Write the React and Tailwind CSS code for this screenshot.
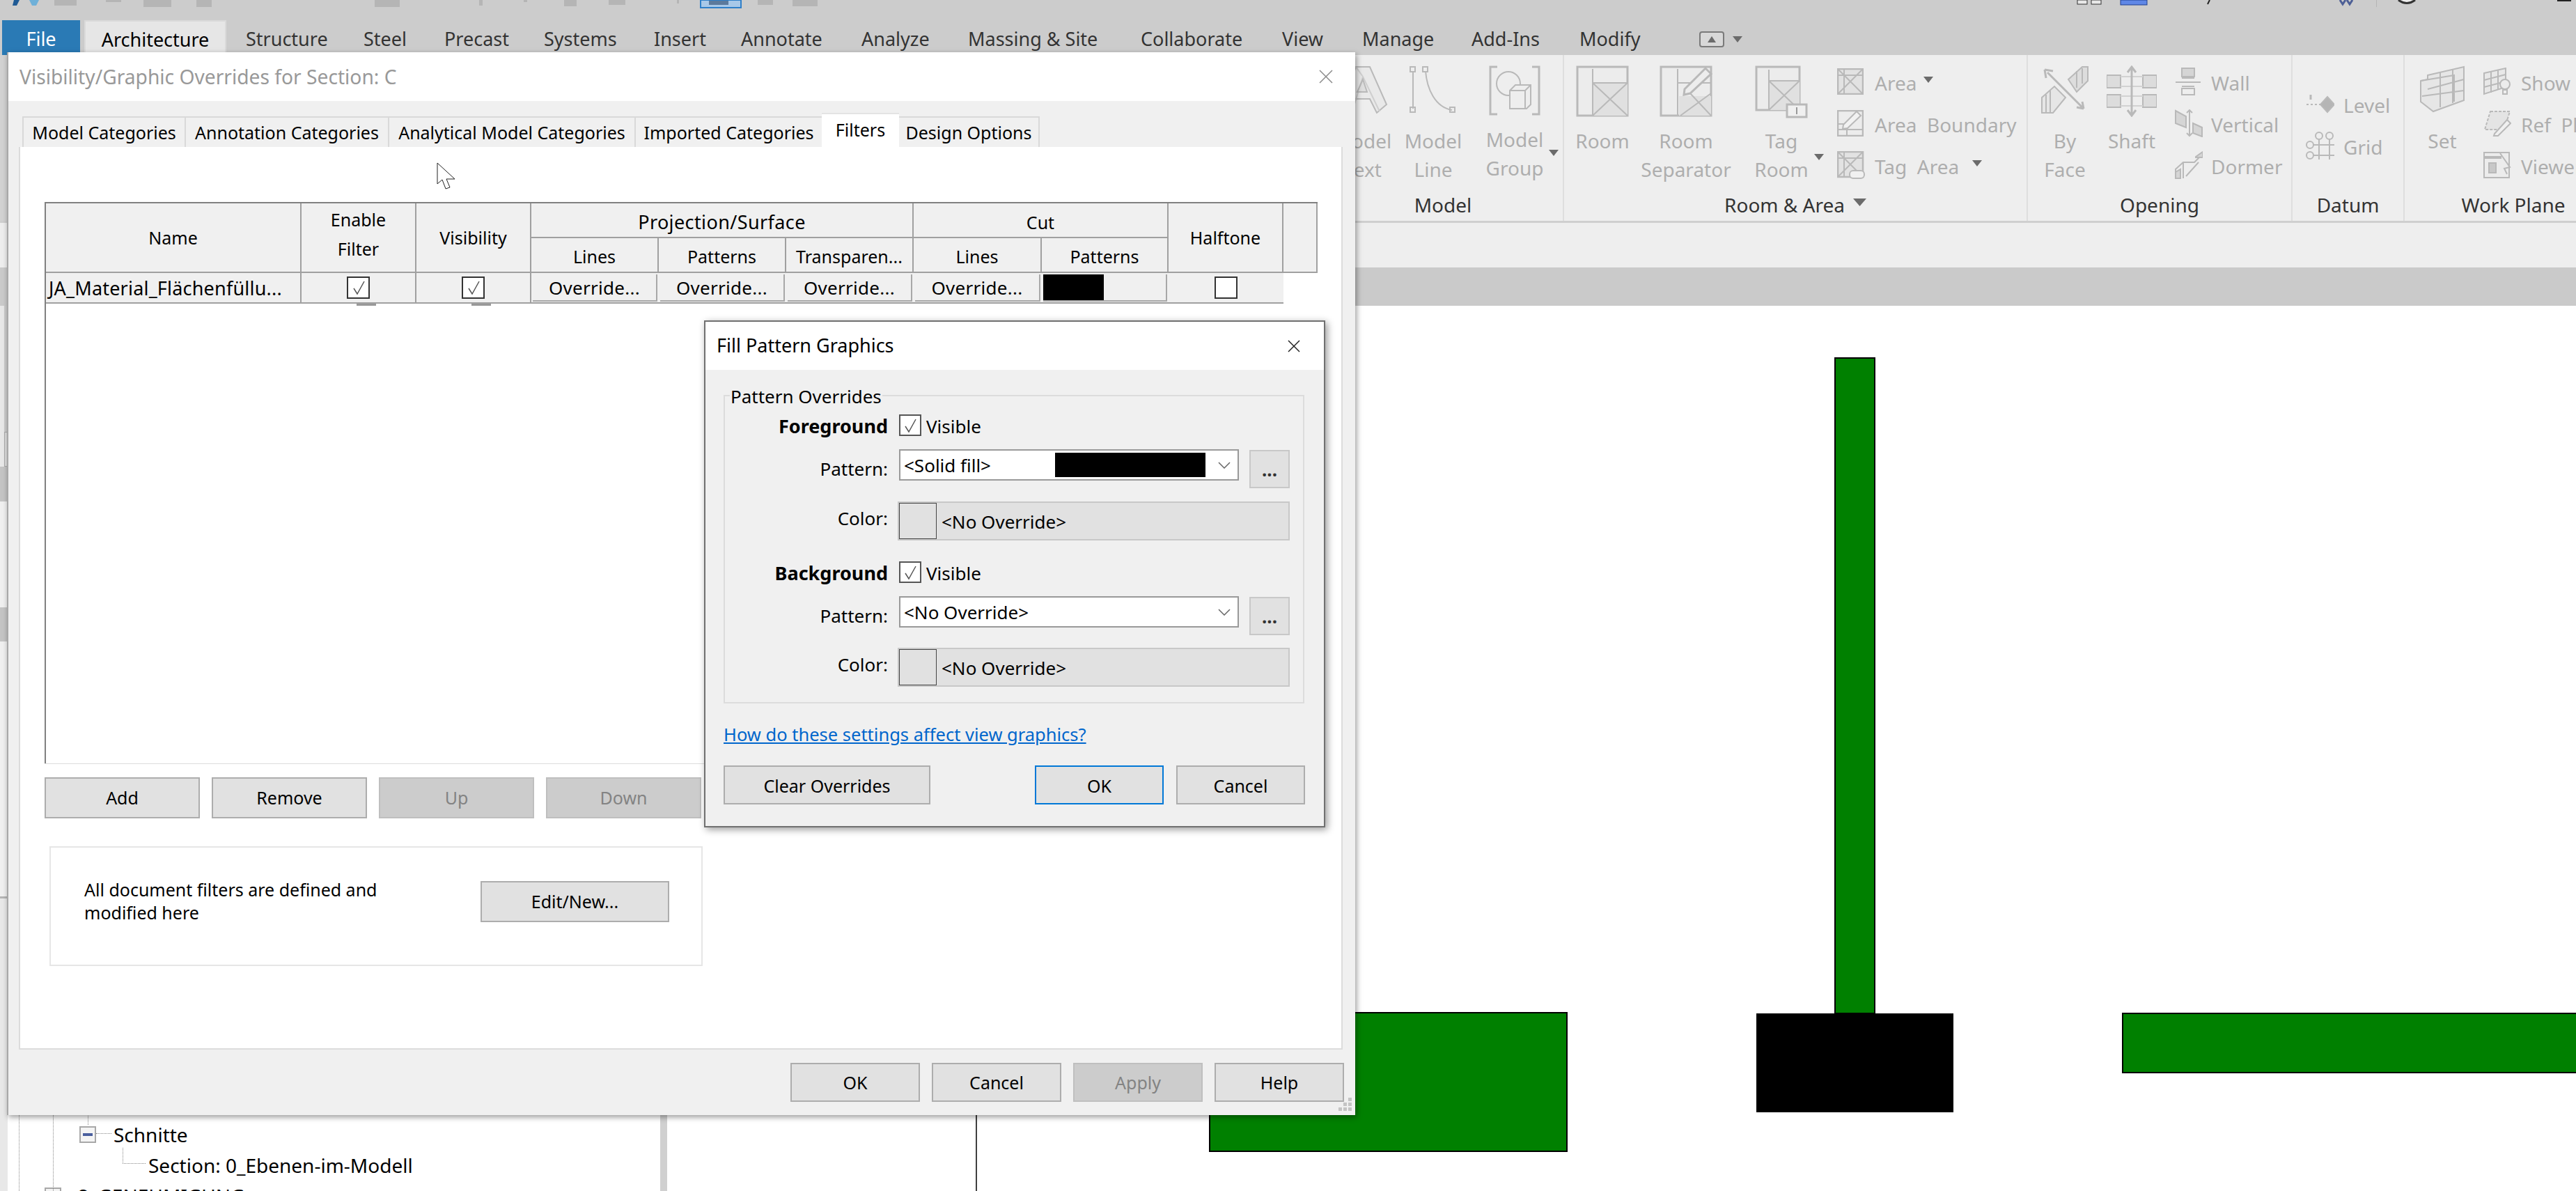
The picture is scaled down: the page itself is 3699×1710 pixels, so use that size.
import React from 'react';

const ribbonTabs = [
  ['Structure', 'w-[169px]'],
  ['Steel', 'w-[116px]'],
  ['Precast', 'w-[143px]'],
  ['Systems', 'w-[158px]'],
  ['Insert', 'w-[125px]'],
  ['Annotate', 'w-[173px]'],
  ['Analyze', 'w-[153px]'],
  ['Massing & Site', 'w-[248px]'],
  ['Collaborate', 'w-[203px]'],
  ['View', 'w-[115px]'],
  ['Manage', 'w-[157px]'],
  ['Add-Ins', 'w-[155px]'],
  ['Modify', 'w-[172px]'],
];

const dialogTabs = [
  ['Model Categories', 'w-[233px]'],
  ['Annotation Categories', 'w-[292px]'],
  ['Analytical Model Categories', 'w-[354px]'],
  ['Imported Categories', 'w-[269px]'],
];

const Caret = ({ className = '' }) => (
  <svg width="14" height="9" viewBox="0 0 14 9" preserveAspectRatio="none" className={className}>
    <polygon points="0,0 14,0 7,9" fill="#6b6b6b" />
  </svg>
);

const Ico = ({ w, h, children }) => (
  <svg width={w} height={h} viewBox={`0 0 ${w} ${h}`} fill="none" stroke="#b9b9b9" strokeWidth="2" className="shrink-0 blur-[0.4px]">
    {children}
  </svg>
);

const ModelTextIcon = () => (
  <Ico w={72} h={70}>
    <path d="M2 68 L26 2 L46 2 L70 56 L56 68 L46 48 L24 48 L18 68 Z" fill="#e9e9e9" />
    <path d="M26 2 L36 16 L60 66 M36 16 L22 62" stroke="#cfcfcf" />
    <path d="M28 38 L36 20 L42 38 Z" fill="#dedede" />
  </Ico>
);
const ModelLineIcon = () => (
  <Ico w={70} h={70}>
    <path d="M6 8 V62 M24 8 C26 34 38 60 62 64" />
    <rect x="2" y="2" width="7" height="7" />
    <rect x="2" y="60" width="7" height="7" />
    <rect x="20" y="2" width="7" height="7" />
    <rect x="59" y="60" width="7" height="7" />
  </Ico>
);
const ModelGroupIcon = () => (
  <Ico w={74} h={72}>
    <path d="M12 2 H2 V70 H12 M62 2 H72 V70 H62" strokeWidth="3" />
    <circle cx="28" cy="26" r="17" />
    <path d="M30 36 L38 28 H60 V56 L54 62 H30 Z" fill="#eeeeee" />
    <path d="M30 36 H52 V62 M52 36 L60 28" />
  </Ico>
);
const RoomIcon = () => (
  <Ico w={76} h={74}>
    <rect x="2" y="2" width="72" height="70" fill="#ececec" strokeWidth="3" />
    <rect x="24" y="25" width="50" height="47" fill="#e0e0e0" stroke="none" />
    <path d="M24 5 V72 M24 25 H74 M24 72 L74 25 M24 25 L74 72" />
  </Ico>
);
const SeparatorIcon = () => (
  <Ico w={76} h={74}>
    <rect x="2" y="2" width="72" height="70" fill="#ececec" strokeWidth="3" />
    <rect x="28" y="44" width="46" height="28" fill="#e0e0e0" stroke="none" />
    <path d="M26 5 V72 M26 25 H74 M30 72 L74 40 M44 40 L74 72" />
    <path d="M36 34 L66 4 L74 12 L44 40 L35 42 Z" fill="#ededed" strokeWidth="3" />
  </Ico>
);
const TagRoomIcon = () => (
  <Ico w={76} h={76}>
    <rect x="2" y="2" width="62" height="62" fill="#ececec" strokeWidth="3" />
    <rect x="20" y="22" width="44" height="42" fill="#e0e0e0" stroke="none" />
    <path d="M20 6 V64 M20 22 H64 M20 64 L64 22 M20 22 L64 64" />
    <rect x="46" y="56" width="28" height="18" fill="#f0f0f0" strokeWidth="3" />
    <path d="M60 60 V70" stroke="#999" />
  </Ico>
);
const AreaIcon = () => (
  <Ico w={38} h={38}>
    <rect x="1" y="1" width="36" height="36" fill="#e2e2e2" strokeWidth="2.5" />
    <path d="M2 2 L36 36 M36 2 L2 36 M10 2 V36 M2 10 H36" />
  </Ico>
);
const BoundaryIcon = () => (
  <Ico w={38} h={38}>
    <rect x="1" y="1" width="36" height="36" fill="#ececec" strokeWidth="2.5" />
    <path d="M2 28 H36 M14 28 V36 M2 20 H14" />
    <path d="M9 21 L28 2 L34 8 L15 26 L8 27 Z" fill="#f2f2f2" />
  </Ico>
);
const TagAreaIcon = () => (
  <Ico w={40} h={40}>
    <rect x="1" y="1" width="36" height="36" fill="#e2e2e2" strokeWidth="2.5" />
    <path d="M2 2 L36 36 M36 2 L2 36 M10 2 V36 M2 10 H36" />
    <rect x="18" y="28" width="21" height="11" rx="5" fill="#f0f0f0" />
  </Ico>
);
const ByFaceIcon = () => (
  <Ico w={70} h={70}>
    <path d="M40 20 L60 2 H68 V22 L52 38 Z" fill="#dddddd" />
    <path d="M52 8 V32 M60 4 V26" />
    <path d="M2 46 L20 30 L36 46 L18 68 H2 Z" fill="#e6e6e6" />
    <path d="M8 42 V68 M14 36 V68" />
    <path d="M10 10 L60 60 M6 6 L18 8 M6 6 L8 18 M62 62 L52 60 M62 62 L60 52" strokeWidth="3" />
  </Ico>
);
const ShaftIcon = () => (
  <Ico w={72} h={74}>
    <rect x="0" y="14" width="20" height="18" fill="#dcdcdc" />
    <rect x="52" y="14" width="20" height="18" fill="#dcdcdc" />
    <rect x="0" y="42" width="20" height="18" fill="#dcdcdc" />
    <rect x="52" y="42" width="20" height="18" fill="#dcdcdc" />
    <path d="M20 16 H52 M20 30 H52 M20 44 H52 M20 58 H52" stroke="#d2d2d2" />
    <path d="M36 2 V72 M30 10 L36 2 L42 10 M30 64 L36 72 L42 64" strokeWidth="3" />
  </Ico>
);
const WallIcon = () => (
  <Ico w={38} h={40}>
    <rect x="10" y="1" width="18" height="12" fill="#d5d5d5" />
    <rect x="10" y="30" width="18" height="9" />
    <path d="M1 21 H37 M10 15 H28 M10 27 H28" />
  </Ico>
);
const VerticalIcon = () => (
  <Ico w={40} h={40}>
    <path d="M1 2 L16 10 V26 L1 20 Z" fill="#d5d5d5" />
    <path d="M26 20 L39 26 V39 L26 34 Z" fill="#d5d5d5" />
    <path d="M21 1 V38 M17 5 L21 1 L25 5 M17 34 L21 38 L25 34" />
  </Ico>
);
const DormerIcon = () => (
  <Ico w={40} h={40}>
    <path d="M1 39 V26 L12 16 H28 L40 4 M12 16 V39 M16 36 L34 16" />
    <path d="M30 8 L40 1 V9 H30 Z M1 30 L8 26 V39 H1 Z" fill="#d5d5d5" />
  </Ico>
);
const LevelIcon = () => (
  <Ico w={41} h={28}>
    <path d="M1 15 H22" strokeDasharray="3 3" />
    <path d="M7 1 V8" strokeWidth="3" />
    <polygon points="31,4 41,15 31,26 21,15" fill="#b5b5b5" />
  </Ico>
);
const GridIcon = () => (
  <Ico w={41} h={40}>
    <circle cx="19" cy="6" r="5" />
    <circle cx="34" cy="6" r="5" />
    <circle cx="6" cy="19" r="5" />
    <circle cx="6" cy="34" r="5" />
    <path d="M19 11 V40 M34 11 V40 M11 19 H41 M11 34 H41" />
  </Ico>
);
const SetIcon = () => (
  <Ico w={66} h={68}>
    <path d="M12 14 L64 2 V50 L20 66 L2 52 V22 L12 20 Z" fill="#e6e6e6" />
    <path d="M12 14 V20 M30 10 V60 M48 6 V54 M2 22 L50 14 V52 M12 34 L64 20 M4 44 L64 36" />
  </Ico>
);
const ShowIcon = () => (
  <Ico w={40} h={40}>
    <path d="M1 8 L32 1 V28 L1 38 Z" fill="#e8e8e8" />
    <path d="M11 6 V36 M21 4 V32 M1 18 L32 10 M1 28 L32 20" />
    <circle cx="31" cy="24" r="7" fill="#ececec" />
    <path d="M28 32 H34 V38 H28 Z" />
  </Ico>
);
const RefIcon = () => (
  <Ico w={40} h={38}>
    <path d="M10 2 L38 2 L30 28 L2 28 Z" fill="#e4e4e4" strokeDasharray="4 2" />
    <path d="M16 34 L34 14 L39 19 L21 37 L15 37 Z" fill="#f0f0f0" />
  </Ico>
);
const ViewerIcon = () => (
  <Ico w={40} h={38}>
    <rect x="1" y="1" width="36" height="36" fill="#ececec" />
    <path d="M1 8 H26" strokeWidth="4" />
    <path d="M8 16 H18 V30 H8 Z" fill="#c8c8c8" />
    <path d="M24 2 L38 22 L30 24 L34 32" />
  </Ico>
);

const BigTool = ({ width, icon, lines, textClass = '-mt-[2px]', caret = '' }) => (
  <div className={`relative flex flex-col items-center shrink-0 ${width}`}>
    <div className="h-[105px] pt-[15px] flex justify-center">{icon}</div>
    <div className={`flex flex-col items-center text-[28px] leading-[41px] text-[#aeaeae] whitespace-nowrap ${textClass}`}>
      {lines.map((l) => (
        <span key={l}>{l}</span>
      ))}
    </div>
    {caret && <Caret className={`absolute ${caret}`} />}
  </div>
);

const SmallTool = ({ icon, label, gap = 'gap-[16px]', caret = '' }) => (
  <div className={`flex items-center h-[40px] whitespace-pre text-[28px] text-[#aeaeae] ${gap}`}>
    {icon}
    <span className="pt-[3px]">{label}</span>
    {caret && <Caret className={caret} />}
  </div>
);

const RibbonGroup = ({ width, label, children, arrow }) => (
  <div className={`flex flex-col shrink-0 h-full border-r-2 border-[#dedede] last:border-r-0 ${width}`}>
    <div className="flex h-[196px]">{children}</div>
    <div className="flex items-center justify-center gap-[12px] h-[38px] text-[28px] text-[#333333] whitespace-nowrap">
      {label}
      {arrow && <Caret className="mb-[8px] w-[19px] h-[11px]" />}
    </div>
  </div>
);

const Check = ({ checked, size = 'w-[33px] h-[32px]', dark = 'border-[#333333]' }) => (
  <span className={`relative flex items-center justify-center bg-white border-2 shrink-0 ${size} ${dark}`}>
    {checked && (
      <svg width="24" height="24" viewBox="0 0 24 24" fill="none" stroke="#555555" strokeWidth="1.5">
        <path d="M5 13 L10 21 L20 3" />
      </svg>
    )}
  </span>
);

const Chevron = () => (
  <svg width="18" height="10" viewBox="0 0 18 10" fill="none" stroke="#666666" strokeWidth="1.5" className="shrink-0">
    <path d="M1 1 L9 9 L17 1" />
  </svg>
);

const Button = ({ className = '', disabled, focused, children }) => {
  let tone = 'bg-[#e1e1e1] border-[#adadad] text-black';
  if (disabled) tone = 'bg-[#cccccc] border-[#bfbfbf] text-[#838383]';
  if (focused) tone = 'bg-[#e1e1e1] border-[#0078d7] text-black';
  return (
    <div className={`flex items-center justify-center shrink-0 border-2 pt-[1px] text-[25px] ${tone} ${className}`}>
      {children}
    </div>
  );
};

const HeaderCell = ({ className = '', children }) => (
  <div className={`flex items-center justify-center text-center bg-[#f0f0f0] border-r-2 border-b-2 border-[#a0a0a0] leading-[42px] ${className}`}>
    {children}
  </div>
);

const OverrideCell = ({ children }) => (
  <div className="flex h-[44px] bg-[#f0f0f0] border-b-2 border-[#a0a0a0] p-[2px] pb-[1px]">
    <div className="flex flex-1 items-center justify-center pt-[2px] border-b-2 border-r-2 border-[#a8a8a8] text-[26px] tracking-[0.3px]">{children}</div>
  </div>
);

const ColorRow = ({ top }) => (
  <div className={`flex ${top}`}>
    <span className="w-[235px] pr-[1px] pt-[2px] text-right text-[26px] leading-[44px]">Color:</span>
    <div className="flex items-center ml-[13px] w-[563px] h-[56px] bg-[#e1e1e1] border-2 border-[#c8c8c8]">
      <span className="w-[54px] h-[52px] bg-[#e1e1e1] border border-[#444444]" />
      <span className="ml-[7px] pt-[3px] text-[26px]">{'<No Override>'}</span>
    </div>
  </div>
);

const PatternRow = ({ top, children }) => (
  <div className={`flex h-[55px] ${top}`}>
    <span className="w-[235px] pr-[1px] pt-[6px] text-right text-[26px] leading-[44px]">Pattern:</span>
    <div className="flex items-center ml-[15px] w-[488px] h-[45px] pl-[5px] pr-[10px] bg-white border-2 border-[#999999] text-[26px]">
      {children}
    </div>
    <div className="flex justify-center ml-[15px] mt-[1px] w-[58px] h-[55px] bg-[#e1e1e1] border-2 border-[#c8c8c8] text-[26px] font-bold text-[#333333] pt-[12px] leading-[28px]">
      ...
    </div>
  </div>
);

const VisibleRow = ({ top, label }) => (
  <div className={`flex items-center h-[31px] ${top}`}>
    <span className="w-[235px] pr-[1px] pt-[3px] text-right text-[27px] font-bold whitespace-nowrap">{label}</span>
    <Check checked size="w-[32px] h-[31px] ml-[15px]" dark="border-[#555555]" />
    <span className="ml-[7px] pt-[3px] text-[26px]">Visible</span>
  </div>
);

const TopIcons = () => (
  <svg width="3699" height="13" viewBox="0 0 3699 13" className="block">
    <path d="M20 0 H28 L24 8 H18 Z" fill="#1f5a94" />
    <path d="M42 0 H56 L52 8 H46 Z" fill="#6fb0d8" />
    <g fill="#b5b5b5">
      <rect x="78" y="0" width="32" height="8" />
      <rect x="152" y="0" width="22" height="3" />
      <rect x="206" y="0" width="40" height="10" />
      <rect x="282" y="0" width="22" height="10" />
      <rect x="538" y="0" width="36" height="10" />
      <rect x="688" y="0" width="5" height="8" />
      <rect x="752" y="0" width="5" height="3" />
      <rect x="810" y="0" width="18" height="9" />
      <rect x="874" y="0" width="24" height="7" />
      <rect x="972" y="0" width="3" height="5" />
      <rect x="1088" y="0" width="22" height="7" />
      <rect x="1138" y="0" width="36" height="9" />
    </g>
    <rect x="1006" y="0" width="58" height="11" fill="#a8c8e8" stroke="#2f7fc8" strokeWidth="2" />
    <rect x="1018" y="1" width="28" height="6" fill="#5c7a9c" />
    <rect x="2983" y="0" width="14" height="6" fill="#e8e8e8" stroke="#333" />
    <rect x="3003" y="0" width="14" height="6" fill="#e8e8e8" stroke="#333" />
    <rect x="3045" y="0" width="38" height="7" fill="#5f87e6" stroke="#1f3f8f" />
    <path d="M3173 0 L3170 6" stroke="#222" strokeWidth="2" />
    <path d="M3360 0 L3364 6 L3368 0 M3370 0 L3374 6 L3378 0" stroke="#4d5f96" strokeWidth="3" fill="none" />
    <rect x="3412" y="0" width="1" height="10" fill="#b5b5b5" />
    <path d="M3444 0 Q3456 9 3468 0" stroke="#333" strokeWidth="3" fill="#eeeeee" />
    <rect x="3672" y="0" width="20" height="2" fill="#222" />
  </svg>
);

const SectionDrawing = () => (
  <svg width="2741" height="1271" viewBox="958 439 2741 1271" className="block">
    <line x1="1402" y1="1590" x2="1402" y2="1710" stroke="#000" strokeWidth="1.5" />
    <rect x="1737" y="1454" width="513" height="199" fill="#008000" stroke="#000" strokeWidth="2" />
    <rect x="2635" y="514" width="57" height="941" fill="#008000" stroke="#000" strokeWidth="2" />
    <rect x="2522" y="1455" width="283" height="142" fill="#000" />
    <rect x="3048" y="1455" width="700" height="85" fill="#008000" stroke="#000" strokeWidth="2" />
  </svg>
);

const LeftStrip = () => (
  <div className="flex flex-col shrink-0 w-[11px] h-full bg-[#e8e8e8]">
    <div className="h-[181px] ml-[6px] bg-[#cccccc]" />
    <div className="h-[50px] ml-[6px] bg-[#dddddd] border border-[#aaaaaa]" />
    <div className="h-[50px] bg-[#c4c4c4]" />
    <div className="h-[152px] bg-[#f0f0f0]" />
    <div className="h-[49px] bg-[#c4c4c4]" />
    <div className="h-[366px] bg-[#f0f0f0]" />
    <div className="h-[3px] bg-[#b5b5b5]" />
  </div>
);

export default function App() {
  return (
    <div className="relative w-[3699px] h-[1710px] overflow-hidden bg-white text-black font-['Noto_Sans',sans-serif]">
      {/* app chrome behind the dialogs */}
      <div className="h-[79px] bg-[#cccccc]">
        <div className="h-[29px]">
          <TopIcons />
        </div>
        <div className="flex h-[46px] pl-[3px] text-[27px] text-[#333333] whitespace-nowrap">
          <div className="flex items-center justify-center w-[112px] h-[50px] pt-[4px] bg-[#2a7ab5] text-white">File</div>
          <div className="flex items-center justify-center ml-[6px] w-[204px] h-[46px] pt-[8px] bg-[#e6e6e6] border-2 border-b-0 border-[#dadada] text-black">
            Architecture
          </div>
          <div className="flex items-center ml-[28px] pt-[8px]">
            {ribbonTabs.map(([label, w]) => (
              <span key={label} className={w}>{label}</span>
            ))}
            <span className="flex items-center justify-center w-[36px] h-[23px] border-2 border-[#7a7a7a] rounded-[4px] bg-[#d8d8d8]">
              <svg width="12" height="9" viewBox="0 0 12 9"><polygon points="6,0 12,9 0,9" fill="#6b6b6b" /></svg>
            </span>
            <Caret className="ml-[12px]" />
          </div>
        </div>
      </div>

      <div className="flex h-[241px] bg-[#eeeeee] border-b-[3px] border-[#cfcfcf]">
        <div className="w-[10px] shrink-0 bg-[#d2d2d2]" />
        <div className="w-[1890px] shrink-0" />
        <RibbonGroup width="w-[346px]" label="Model">
          <BigTool width="w-[114px]" icon={<ModelTextIcon />} lines={['Model', 'Text']} />
          <BigTool width="w-[88px]" icon={<ModelLineIcon />} lines={['Model', 'Line']} />
          <div className="w-[18px]" />
          <BigTool width="w-[110px]" icon={<ModelGroupIcon />} lines={['Model', 'Group']} textClass="-mt-[4px]" caret="left-[104px] top-[136px]" />
        </RibbonGroup>
        <RibbonGroup width="w-[666px]" label="Room & Area" arrow>
          <BigTool width="w-[110px]" icon={<RoomIcon />} lines={['Room']} />
          <BigTool width="w-[130px]" icon={<SeparatorIcon />} lines={['Room', 'Separator']} />
          <BigTool width="w-[144px]" icon={<TagRoomIcon />} lines={['Tag', 'Room']} caret="left-[119px] top-[142px]" />
          <div className="flex flex-col gap-[20px] ml-[8px] pt-[18px]">
            <SmallTool icon={<AreaIcon />} label="Area" caret="-ml-[6px] mb-[6px]" />
            <SmallTool icon={<BoundaryIcon />} label="Area  Boundary" />
            <SmallTool icon={<TagAreaIcon />} label="Tag  Area" gap="gap-[14px]" caret="ml-[5px] mb-[6px]" />
          </div>
        </RibbonGroup>
        <RibbonGroup width="w-[380px]" label="Opening">
          <BigTool width="w-[106px]" icon={<ByFaceIcon />} lines={['By', 'Face']} />
          <BigTool width="w-[86px]" icon={<ShaftIcon />} lines={['Shaft']} />
          <div className="flex flex-col gap-[20px] ml-[19px] pt-[18px]">
            <SmallTool icon={<WallIcon />} label="Wall" gap="gap-[14px]" />
            <SmallTool icon={<VerticalIcon />} label="Vertical" gap="gap-[12px]" />
            <SmallTool icon={<DormerIcon />} label="Dormer" gap="gap-[12px]" />
          </div>
        </RibbonGroup>
        <RibbonGroup width="w-[161px]" label="Datum">
          <div className="flex flex-col gap-[20px] ml-[19px] pt-[50px]">
            <SmallTool icon={<LevelIcon />} label="Level" gap="gap-[13px]" />
            <SmallTool icon={<GridIcon />} label="Grid" gap="gap-[13px]" />
          </div>
        </RibbonGroup>
        <RibbonGroup width="w-[312px]" label="Work Plane">
          <BigTool width="w-[108px]" icon={<SetIcon />} lines={['Set']} />
          <div className="flex flex-col gap-[20px] ml-[5px] pt-[18px]">
            <SmallTool icon={<ShowIcon />} label="Show" gap="gap-[14px]" />
            <SmallTool icon={<RefIcon />} label="Ref  Plane" gap="gap-[14px]" />
            <SmallTool icon={<ViewerIcon />} label="Viewer" gap="gap-[14px]" />
          </div>
        </RibbonGroup>
      </div>

      <div className="h-[64px] bg-[#eeeeee]" />
      <div className="h-[55px] bg-[#cacaca]" />

      <div className="flex h-[1271px]">
        <LeftStrip />
        <div className="flex flex-col w-[937px] shrink-0 pt-[1168px] text-[28px] whitespace-nowrap">
          <div className="flex items-center shrink-0 h-[44px] pl-[103px]">
            <span className="flex items-center justify-center w-[24px] h-[24px] bg-[#f4f4f4] border-2 border-[#a8a8a8]">
              <span className="w-[14px] h-[4px] bg-[#4a5f9e]" />
            </span>
            <span className="ml-[25px]">Schnitte</span>
          </div>
          <div className="flex items-center shrink-0 h-[44px] pl-[202px]">Section: 0_Ebenen-im-Modell</div>
          <div className="flex items-center shrink-0 h-[44px] pl-[53px]">
            <span className="w-[24px] h-[24px] bg-[#f4f4f4] border-2 border-[#a8a8a8]" />
            <span className="ml-[24px]">2_GENEHMIGUNG</span>
          </div>
        </div>
        <div className="w-[10px] shrink-0 bg-[#d0d0d0]" />
        <div className="flex-1">
          <SectionDrawing />
        </div>
      </div>

      {/* tree connectors */}
      <div className="absolute left-[27px] top-[1600px] h-[110px] border-l border-dotted border-[#888888]" />
      <div className="absolute left-[76px] top-[1600px] h-[110px] border-l border-dotted border-[#888888]" />
      <div className="absolute left-[126px] top-[1600px] h-[15px] border-l border-dotted border-[#888888]" />
      <div className="absolute left-[138px] top-[1627px] w-[22px] border-t border-dotted border-[#888888]" />
      <div className="absolute left-[176px] top-[1648px] w-[33px] h-[23px] border-l border-b border-dotted border-[#888888]" />

      {/* Visibility/Graphic Overrides dialog */}
      <div className="absolute left-[10px] top-[75px] flex flex-col w-[1936px] h-[1526px] bg-[#f0f0f0] border-l-2 border-[#a8a8a8] shadow-[2px_3px_8px_rgba(0,0,0,0.4)] text-[25px]">
        <div className="flex items-center justify-between shrink-0 h-[70px] pl-[16px] pr-[32px] bg-white text-[28.2px] text-[#999999]">
          <span>Visibility/Graphic Overrides for Section: C</span>
          <svg width="20" height="20" viewBox="0 0 20 20" stroke="#8a8a8a" strokeWidth="1.5">
            <path d="M1 1 L19 19 M19 1 L1 19" />
          </svg>
        </div>

        <div className="flex items-end shrink-0 h-[66px] ml-[20px]">
          {dialogTabs.map(([label, w]) => (
            <div key={label} className={`flex items-center justify-center h-[44px] pt-[2px] bg-[#f0f0f0] border-t-2 border-l-2 border-[#d9d9d9] whitespace-nowrap ${w}`}>
              {label}
            </div>
          ))}
          <div className="flex justify-center w-[111px] h-[49px] pt-[4px] bg-white border-t-2 border-[#e3e3e3]">Filters</div>
          <div className="flex items-center justify-center w-[202px] h-[44px] pt-[2px] bg-[#f0f0f0] border-t-2 border-r-2 border-[#d9d9d9] whitespace-nowrap">
            Design Options
          </div>
        </div>

        <div className="shrink-0 ml-[15px] w-[1901px] h-[1296px] pt-[79px] pl-[35px] bg-white border-2 border-[#dcdcdc] border-t-0">
          <div className="w-[1828px] h-[806px] border-l-2 border-t-2 border-[#808080] border-b-0">
            <div className="grid grid-cols-[367px_165px_165px_183px_183px_183px_184px_182px_165px_49px] grid-rows-[50px_50px_44px]">
              <HeaderCell className="row-span-2">Name</HeaderCell>
              <HeaderCell className="row-span-2 pb-[11px]">Enable<br />Filter</HeaderCell>
              <HeaderCell className="row-span-2">Visibility</HeaderCell>
              <HeaderCell className="col-span-3 pt-[6px]">
                <span className="text-[27px] tracking-[0.4px]">Projection/Surface</span>
              </HeaderCell>
              <HeaderCell className="col-span-2 pt-[6px]">Cut</HeaderCell>
              <HeaderCell className="row-span-2">Halftone</HeaderCell>
              <HeaderCell className="row-span-2 border-r-0" />
              <HeaderCell className="pt-[3px]">Lines</HeaderCell>
              <HeaderCell className="pt-[3px]">Patterns</HeaderCell>
              <HeaderCell className="pt-[3px]">Transparen...</HeaderCell>
              <HeaderCell className="pt-[3px]">Lines</HeaderCell>
              <HeaderCell className="pt-[3px]">Patterns</HeaderCell>

              <div className="flex items-center h-[44px] pl-[4px] pt-[2px] bg-[#f0f0f0] border-b-2 border-r-2 border-[#a0a0a0] whitespace-nowrap overflow-hidden text-[27px] tracking-[0.2px]">
                JA_Material_Flächenfüllu...
              </div>
              <div className="relative flex items-center justify-center h-[44px] bg-[#f0f0f0] border-b-2 border-r-2 border-[#a0a0a0]">
                <Check checked />
                <span className="absolute left-[79px] top-[44px] w-[28px] h-[3px] bg-[#999999]" />
              </div>
              <div className="relative flex items-center justify-center h-[44px] bg-[#f0f0f0] border-b-2 border-r-2 border-[#a0a0a0]">
                <Check checked />
                <span className="absolute left-[79px] top-[44px] w-[28px] h-[3px] bg-[#999999]" />
              </div>
              <OverrideCell>Override...</OverrideCell>
              <OverrideCell>Override...</OverrideCell>
              <OverrideCell>Override...</OverrideCell>
              <OverrideCell>Override...</OverrideCell>
              <OverrideCell>
                <span className="mr-auto -mt-[2px] w-[87px] h-[37px] bg-black" />
              </OverrideCell>
              <div className="flex items-center justify-center h-[44px] bg-[#f0f0f0] border-b-2 border-[#a0a0a0]">
                <Check size="w-[33px] h-[32px]" />
              </div>
            </div>
          </div>
          <div className="w-[1828px] border-t border-[#dcdcdc]" />

          <div className="flex gap-[17px] mt-[19px]">
            <Button className="w-[223px] h-[59px]">Add</Button>
            <Button className="w-[223px] h-[59px]">Remove</Button>
            <Button disabled className="w-[223px] h-[59px]">Up</Button>
            <Button disabled className="w-[223px] h-[59px]">Down</Button>
          </div>

          <div className="flex items-center justify-between ml-[7px] mt-[40px] w-[938px] h-[172px] pl-[48px] pr-[46px] pb-[14px] border-2 border-[#e6e6e6]">
            <p className="leading-[33px]">All document filters are defined and<br />modified here</p>
            <Button className="w-[271px] h-[59px]">Edit/New...</Button>
          </div>
        </div>

        <div className="flex justify-end gap-[17px] pt-[19px] pr-[16px]">
          <Button className="w-[186px] h-[56px]">OK</Button>
          <Button className="w-[186px] h-[56px]">Cancel</Button>
          <Button disabled className="w-[186px] h-[56px]">Apply</Button>
          <Button className="w-[186px] h-[56px]">Help</Button>
        </div>

        <svg width="20" height="20" viewBox="0 0 20 20" fill="#c4c4c4" className="absolute right-[5px] bottom-[5px]">
          <rect x="15" y="0" width="5" height="5" />
          <rect x="8" y="7" width="5" height="5" />
          <rect x="15" y="7" width="5" height="5" />
          <rect x="1" y="14" width="5" height="5" />
          <rect x="8" y="14" width="5" height="5" />
          <rect x="15" y="14" width="5" height="5" />
        </svg>
      </div>

      {/* mouse cursor */}
      <svg width="28" height="40" viewBox="0 0 28 40" className="absolute left-[627px] top-[233px]">
        <path d="M1 1 V31 L8 25 L13 38 L19 36 L14 24 L26 24 Z" fill="#ffffff" stroke="#222222" strokeWidth="1" />
      </svg>

      {/* Fill Pattern Graphics dialog */}
      <div className="absolute left-[1011px] top-[460px] flex flex-col w-[892px] h-[728px] bg-[#f0f0f0] border-2 border-[#707070] shadow-[3px_3px_10px_rgba(0,0,0,0.4)] text-[26px]">
        <div className="flex items-center justify-between shrink-0 h-[69px] pl-[16px] pr-[34px] bg-white text-[27px]">
          <span>Fill Pattern Graphics</span>
          <svg width="18" height="18" viewBox="0 0 18 18" stroke="#222222" strokeWidth="1.5">
            <path d="M1 1 L17 17 M17 1 L1 17" />
          </svg>
        </div>

        <div className="relative ml-[26px] mt-[36px] w-[834px] h-[443px] border-2 border-[#dcdcdc]">
          <span className="absolute -top-[18px] left-[7px] px-[1px] bg-[#f0f0f0] leading-[36px]">Pattern Overrides</span>
          <VisibleRow top="mt-[26px]" label="Foreground" />
          <PatternRow top="mt-[19px]">
            <span className="pt-[2px]">{'<Solid fill>'}</span>
            <span className="ml-auto w-[216px] h-[35px] bg-black" />
            <span className="ml-[18px]"><Chevron /></span>
          </PatternRow>
          <ColorRow top="mt-[20px]" />
          <VisibleRow top="mt-[30px]" label="Background" />
          <PatternRow top="mt-[19px]">
            <span className="pt-[2px]">{'<No Override>'}</span>
            <span className="ml-auto"><Chevron /></span>
          </PatternRow>
          <ColorRow top="mt-[19px]" />
        </div>

        <a className="ml-[26px] mt-[28px] text-[25.5px] text-[#0066cc] underline leading-[33px] whitespace-nowrap">
          How do these settings affect view graphics?
        </a>

        <div className="flex ml-[26px] mt-[28px] w-[835px]">
          <Button className="w-[297px] h-[56px] pt-[3px]">Clear Overrides</Button>
          <Button focused className="ml-auto w-[185px] h-[56px] pt-[3px]">OK</Button>
          <Button className="ml-[18px] w-[185px] h-[56px] pt-[3px]">Cancel</Button>
        </div>
      </div>
    </div>
  );
}
